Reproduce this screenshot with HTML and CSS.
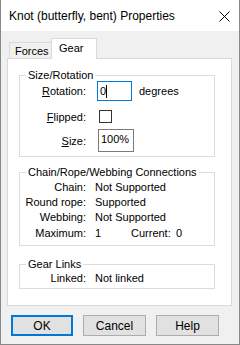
FILE: index.html
```html
<!DOCTYPE html>
<html lang="en">
<head>
  <meta charset="UTF-8">
  <title>Knot (butterfly, bent) Properties</title>
  <link rel="stylesheet" href="styles.css">
</head>
<body>
  <div class="dialog">
    <div class="titlebar">
      <span class="title">Knot (butterfly, bent) Properties</span>
      <svg class="close" width="11" height="11" viewBox="0 0 11 11">
        <path d="M0.5 0.5 L10.5 10.5 M10.5 0.5 L0.5 10.5" stroke="#000" stroke-width="1"/>
      </svg>
    </div>

    <div class="client">
      <div class="tabs">
        <div class="tab forces">Forces</div>
        <div class="tab active">Gear</div>
      </div>

      <div class="panel">
        <fieldset class="group size-group">
          <legend>Size/Rotation</legend>
          <div class="row rotation-row">
            <span class="lbl"><u>R</u>otation:</span>
            <div class="edit focused">0<span class="caret"></span></div>
            <span class="unit">degrees</span>
          </div>
          <div class="row flip-row">
            <span class="lbl"><u>F</u>lipped:</span>
            <div class="check"></div>
          </div>
          <div class="row size-row">
            <span class="lbl"><u>S</u>ize:</span>
            <div class="edit static">100%</div>
          </div>
        </fieldset>

        <fieldset class="group conn-group">
          <legend>Chain/Rope/Webbing Connections</legend>
          <div class="row info"><span class="lbl">Chain:</span><span class="val">Not Supported</span></div>
          <div class="row info"><span class="lbl">Round rope:</span><span class="val">Supported</span></div>
          <div class="row info"><span class="lbl">Webbing:</span><span class="val">Not Supported</span></div>
          <div class="row info max-row">
            <span class="lbl">Maximum:</span><span class="val num">1</span>
            <span class="sub-lbl">Current:</span><span class="val cur">0</span>
          </div>
        </fieldset>

        <fieldset class="group links-group">
          <legend>Gear Links</legend>
          <div class="row info"><span class="lbl">Linked:</span><span class="val">Not linked</span></div>
        </fieldset>
      </div>

      <div class="buttons">
        <button class="btn default">OK</button>
        <button class="btn">Cancel</button>
        <button class="btn">Help</button>
      </div>
    </div>
  </div>
</body>
</html>
```

FILE: styles.css
```css
body {
  margin: 0;
  font-family: "Liberation Sans", Arial, sans-serif;
  font-size: 11px;
  color: #000;
  background: #fff;
}
.dialog {
  width: 240px;
  height: 345px;
  box-sizing: border-box;
  border: 1px solid #888;
  border-top: none;
  background: #f0f0f0;
  display: flex;
  flex-direction: column;
  white-space: nowrap;
}
.titlebar {
  height: 31px;
  flex: none;
  background: #fff;
  display: flex;
  align-items: center;
  padding-left: 8px;
}
.title {
  flex: 1;
  font-size: 12px;
  margin-top: 1px;
}
.close {
  margin-right: 9px;
  margin-top: 1px;
}
.client {
  flex: 1;
  padding: 7px 7px 0 6px;
}

/* tabs */
.tabs {
  display: flex;
  height: 20px;
  padding-left: 2px;
}
.tab {
  box-sizing: border-box;
  border: 1px solid #d9d9d9;
  border-bottom: none;
  background: #f0f0f0;
  line-height: 16px;
  margin-top: 4px;
  height: 16px;
  padding-left: 5px;
}
.tab.forces {
  width: 43px;
}
.tab.active {
  position: relative;
  z-index: 1;
  width: 46px;
  height: 21px;
  margin-top: 0;
  margin-left: -1px;
  padding-left: 7px;
  line-height: 18px;
  background: #fff;
}
.panel {
  box-sizing: border-box;
  height: 248px;
  background: #fff;
  border: 1px solid #d9d9d9;
  padding-top: 9px;
}

/* group boxes */
.group {
  box-sizing: border-box;
  margin: 0 16px 0 11px;
  padding: 0;
  border: 1px solid #dcdcdc;
  min-width: 0;
}
.group legend {
  margin-left: 6px;
  padding: 0 2px;
  line-height: 14px;
}
.size-group {
  height: 89px;
}
.conn-group {
  height: 81px;
  margin-top: 8px;
  padding-top: 1px;
}
.links-group {
  height: 32px;
  margin-top: 11px;
}
.row {
  display: flex;
  align-items: center;
}
.lbl {
  width: 66px;
  text-align: right;
  flex: none;
}
.val {
  margin-left: 9px;
}
.info {
  line-height: 15px;
}
.max-row {
  margin-top: 1px;
}
.max-row .num {
  width: 36px;
}
.sub-lbl {
  width: 34px;
}
.max-row .cur {
  margin-left: 11px;
}

/* edit controls */
.rotation-row {
  margin-top: -1px;
  height: 20px;
}
.edit {
  box-sizing: border-box;
  height: 20px;
  width: 35px;
  margin-left: 11px;
  border: 1px solid #7a7a7a;
  background: #fff;
  display: flex;
  align-items: center;
  padding-left: 2px;
}
.edit.focused {
  border-color: #0078d7;
}
.caret {
  width: 1px;
  height: 13px;
  background: #000;
}
.unit {
  margin-left: 7px;
}
.flip-row {
  margin-top: 9px;
  height: 13px;
}
.check {
  box-sizing: border-box;
  width: 13px;
  height: 13px;
  margin-left: 13px;
  border: 1px solid #333;
  background: #fff;
}
.size-row {
  margin-top: 6px;
  height: 23px;
}
.edit.static {
  height: 23px;
  width: 36px;
  margin-left: 12px;
  align-items: flex-start;
  padding-top: 3px;
}

/* buttons */
.buttons {
  display: flex;
  gap: 10px;
  margin-top: 9px;
  padding-left: 4px;
}
.btn {
  box-sizing: border-box;
  width: 63px;
  height: 21px;
  padding: 0;
  font-family: inherit;
  font-size: 12px;
  color: #000;
  background: #e1e1e1;
  border: 1px solid #adadad;
  border-radius: 0;
}
.btn.default {
  width: 62px;
  border: 2px solid #0078d7;
}
```
